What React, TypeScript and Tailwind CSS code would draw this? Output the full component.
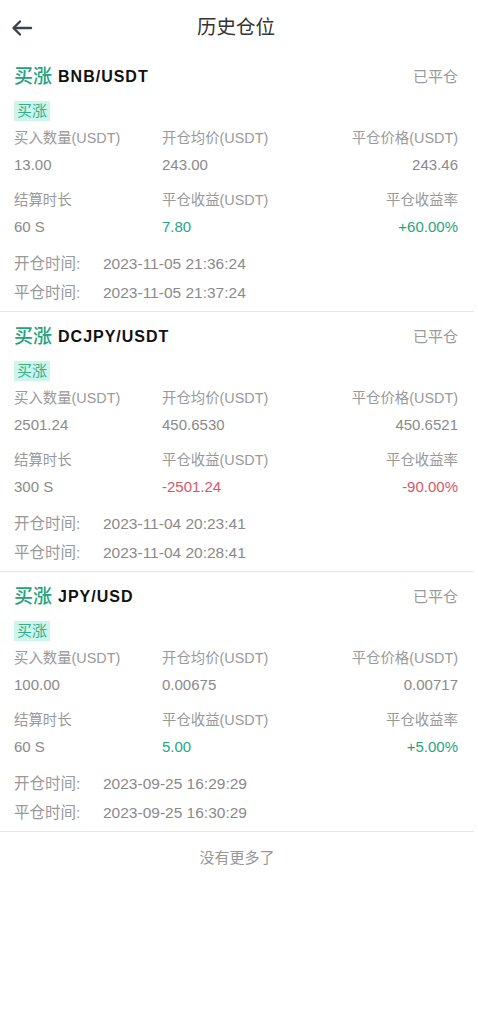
import React from "react";

type Order = {
  symbol: string;
  amount: string;
  openPrice: string;
  closePrice: string;
  duration: string;
  profit: string;
  rate: string;
  openTime: string;
  closeTime: string;
};

const orders: Order[] = [
  {
    symbol: "BNB/USDT",
    amount: "13.00",
    openPrice: "243.00",
    closePrice: "243.46",
    duration: "60 S",
    profit: "7.80",
    rate: "+60.00%",
    openTime: "2023-11-05 21:36:24",
    closeTime: "2023-11-05 21:37:24",
  },
  {
    symbol: "DCJPY/USDT",
    amount: "2501.24",
    openPrice: "450.6530",
    closePrice: "450.6521",
    duration: "300 S",
    profit: "-2501.24",
    rate: "-90.00%",
    openTime: "2023-11-04 20:23:41",
    closeTime: "2023-11-04 20:28:41",
  },
  {
    symbol: "JPY/USD",
    amount: "100.00",
    openPrice: "0.00675",
    closePrice: "0.00717",
    duration: "60 S",
    profit: "5.00",
    rate: "+5.00%",
    openTime: "2023-09-25 16:29:29",
    closeTime: "2023-09-25 16:30:29",
  },
];

const font = { fontFamily: '"Liberation Sans", Arial, "Noto Sans CJK SC", sans-serif' };

const OrderCard: React.FC<{ order: Order }> = ({ order }) => {
  const loss = order.profit.startsWith("-");
  const profitColor = loss ? "text-[#d9566b]" : "text-[#26a580]";

  return (
    <div className="pl-[14px] pr-[16px] pt-[14px] pb-[8px] border-b border-[#e6e6f0]">
      <div className="h-[22px] flex items-center justify-between">
        <div className="flex items-center">
          <span className="text-[19px] text-[#22a37d] font-medium">买涨</span>
          <span className="ml-[6px] text-[16px] font-bold tracking-[1px] text-[#111]">
            {order.symbol}
          </span>
        </div>
        <span className="text-[15px] text-[#999]">已平仓</span>
      </div>

      <div className="mt-[13px] h-[20px] flex">
        <span className="px-[3px] bg-[#cdf5ec] text-[#33b08a] text-[15px] leading-[20px]">买涨</span>
      </div>

      <div className="mt-[8px] flex h-[20px] items-center text-[14.4px] text-[#999]">
        <span className="w-[148px]">买入数量(USDT)</span>
        <span className="flex-1">开仓均价(USDT)</span>
        <span className="text-right">平仓价格(USDT)</span>
      </div>
      <div className="mt-[6px] flex h-[20px] items-center text-[15px] text-[#8a8a8a]">
        <span className="w-[148px]">{order.amount}</span>
        <span className="flex-1">{order.openPrice}</span>
        <span className="text-right">{order.closePrice}</span>
      </div>

      <div className="mt-[16px] flex h-[20px] items-center text-[14.4px] text-[#999]">
        <span className="w-[148px]">结算时长</span>
        <span className="flex-1">平仓收益(USDT)</span>
        <span className="text-right">平仓收益率</span>
      </div>
      <div className="mt-[6px] flex h-[20px] items-center text-[15px] text-[#8a8a8a]">
        <span className="w-[148px]">{order.duration}</span>
        <span className={`flex-1 ${profitColor}`}>{order.profit}</span>
        <span className={`text-right ${profitColor}`}>{order.rate}</span>
      </div>

      <div className="mt-[17px] flex h-[20px] items-center text-[15.5px] text-[#8a8a8a]">
        <span className="w-[89px] text-[#999]">开仓时间:</span>
        <span>{order.openTime}</span>
      </div>
      <div className="mt-[9px] flex h-[20px] items-center text-[15.5px] text-[#8a8a8a]">
        <span className="w-[89px] text-[#999]">平仓时间:</span>
        <span>{order.closeTime}</span>
      </div>
    </div>
  );
};

const App: React.FC = () => {
  return (
    <div className="min-h-screen bg-white" style={font}>
      <div className="h-[52px] relative flex items-center justify-center pr-[6px]">
        <button className="absolute left-[10px] top-[18px] w-[24px] h-[20px] flex items-center justify-center text-[#3b4352]">
          <svg width="22" height="18" viewBox="0 0 22 18" fill="none" stroke="currentColor" strokeWidth="2.4" strokeLinecap="round" strokeLinejoin="round">
            <path d="M20 9H3" />
            <path d="M9 2.5L2.5 9L9 15.5" />
          </svg>
        </button>
        <h1 className="text-[19.5px] text-[#333] mt-[4px]">历史仓位</h1>
      </div>

      <div className="mr-[4px]">
        {orders.map((o) => (
          <OrderCard key={o.symbol} order={o} />
        ))}
        <div className="h-[52px] flex items-center justify-center text-[15px] text-[#969799]">
          没有更多了
        </div>
      </div>
    </div>
  );
};

export default App;
